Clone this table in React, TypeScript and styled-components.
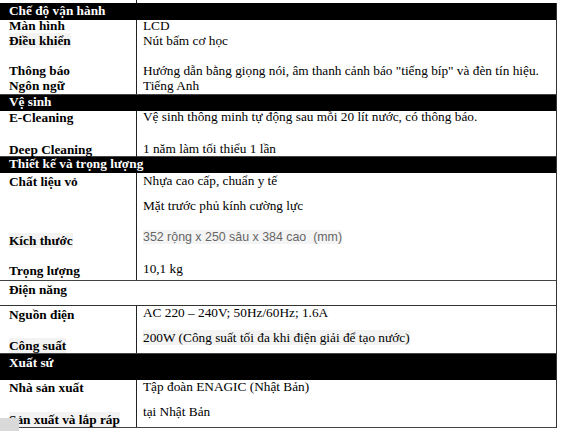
import React from "react"
import styled, { createGlobalStyle } from "styled-components"

const GlobalStyle = createGlobalStyle`
body {
  margin: 0;
  background: #ffffff;
}
* {
  box-sizing: border-box;
}
`

const Page = styled.div`
position: relative;
width: 561px;
height: 431px;
overflow: hidden;
background: #ffffff;
font-family: "Liberation Serif", "Times New Roman", serif;
font-size: 13.3px;
color: #000;
`

const Table = styled.div`
width: 557px;
border-right: 1px solid #333;
display: flex;
flex-direction: column;
`

const TopStrip = styled.div`
height: 3px;
display: grid;
grid-template-columns: 137px 1fr;
border-right: 1px solid #fff;
margin-right: -1px;
background: #fff;
`

const StripCell = styled.div`
border-right: 1px solid #222;
`

const Header = styled.div<{ $h: number; $dark?: boolean }>`
height: ${p => p.$h}px;
background: ${p => (p.$dark ? "#000" : "#fff")};
color: ${p => (p.$dark ? "#fff" : "#000")};
font-weight: bold;
padding-left: 9px;
border-bottom: ${p => (p.$dark ? "none" : "1px solid #333")};
`

const Body = styled.div<{ $h: number }>`
height: ${p => p.$h}px;
display: grid;
grid-template-columns: 137px 1fr;
border-bottom: 1px solid #444;
`

const LabelCell = styled.div`
border-right: 1px solid #222;
padding-left: 9px;
font-weight: bold;
`

const ValueCell = styled.div`
padding-left: 6px;
`

const Line = styled.div<{ $mt: number }>`
line-height: 14px;
height: 14px;
margin-top: ${p => p.$mt}px;
white-space: nowrap;
`

const Hl = styled.span`
background: #f3f3f3;
`

const Sans = styled.span`
font-family: "Liberation Sans", Arial, sans-serif;
font-size: 12.4px;
color: #666;
background: #f4f4f4;
`

const Patch = styled.div`
position: absolute;
left: 0;
top: 418px;
width: 19px;
height: 13px;
background: #d9d9d9;
`

export default function App() {
  return (
    <Page>
      <GlobalStyle />
      <Table>
        <TopStrip>
          <StripCell />
          <div />
        </TopStrip>

        <Header $h={17} $dark>
          <Line $mt={1}>Chế độ vận hành</Line>
        </Header>
        <Body $h={75}>
          <LabelCell>
            <Line $mt={-1}>Màn hình</Line>
            <Line $mt={1}><Hl>Điều khiển</Hl></Line>
            <Line $mt={16}>Thông báo</Line>
            <Line $mt={1}>Ngôn ngữ</Line>
          </LabelCell>
          <ValueCell>
            <Line $mt={-1}>LCD</Line>
            <Line $mt={1}>Nút bấm cơ học</Line>
            <Line $mt={16}>Hướng dẫn bằng giọng nói, âm thanh cảnh báo "tiếng bíp" và đèn tín hiệu.</Line>
            <Line $mt={1}>Tiếng Anh</Line>
          </ValueCell>
        </Body>

        <Header $h={16} $dark>
          <Line $mt={0}>Vệ sinh</Line>
        </Header>
        <Body $h={46}>
          <LabelCell>
            <Line $mt={0}>E-Cleaning</Line>
            <Line $mt={18}>Deep Cleaning</Line>
          </LabelCell>
          <ValueCell>
            <Line $mt={-1}>Vệ sinh thông minh tự động sau mỗi 20 lít nước, có thông báo.</Line>
            <Line $mt={18}>1 năm làm tối thiểu 1 lần</Line>
          </ValueCell>
        </Body>

        <Header $h={16} $dark>
          <Line $mt={0}>Thiết kế và trọng lượng</Line>
        </Header>
        <Body $h={108}>
          <LabelCell>
            <Line $mt={2}>Chất liệu vỏ</Line>
            <Line $mt={45}><Hl>Kích thước</Hl></Line>
            <Line $mt={16}>Trọng lượng</Line>
          </LabelCell>
          <ValueCell>
            <Line $mt={1}>Nhựa cao cấp, chuẩn y tế</Line>
            <Line $mt={11}>Mặt trước phủ kính cường lực</Line>
            <Line $mt={17}><Sans>352 rộng x 250 sâu x 384 cao&nbsp;&nbsp;(mm)</Sans></Line>
            <Line $mt={18}>10,1 kg</Line>
          </ValueCell>
        </Body>

        <Header $h={25}>
          <Line $mt={2}>Điện năng</Line>
        </Header>
        <Body $h={48}>
          <LabelCell>
            <Line $mt={2}>Nguồn điện</Line>
            <Line $mt={17}><Hl>Công suất</Hl></Line>
          </LabelCell>
          <ValueCell>
            <Line $mt={0}>AC 220 – 240V; 50Hz/60Hz; 1.6A</Line>
            <Line $mt={11}><Hl>200W (Công suất tối đa khi điện giải để tạo nước)</Hl></Line>
          </ValueCell>
        </Body>

        <Header $h={26} $dark>
          <Line $mt={2}>Xuất sứ</Line>
        </Header>
        <Body $h={48}>
          <LabelCell>
            <Line $mt={1}>Nhà sản xuất</Line>
            <Line $mt={18}><Hl>Sản xuất và lắp ráp</Hl></Line>
          </LabelCell>
          <ValueCell>
            <Line $mt={0}>Tập đoàn ENAGIC (Nhật Bản)</Line>
            <Line $mt={11}>tại Nhật Bản</Line>
          </ValueCell>
        </Body>
      </Table>
      <Patch />
    </Page>
  )
}
